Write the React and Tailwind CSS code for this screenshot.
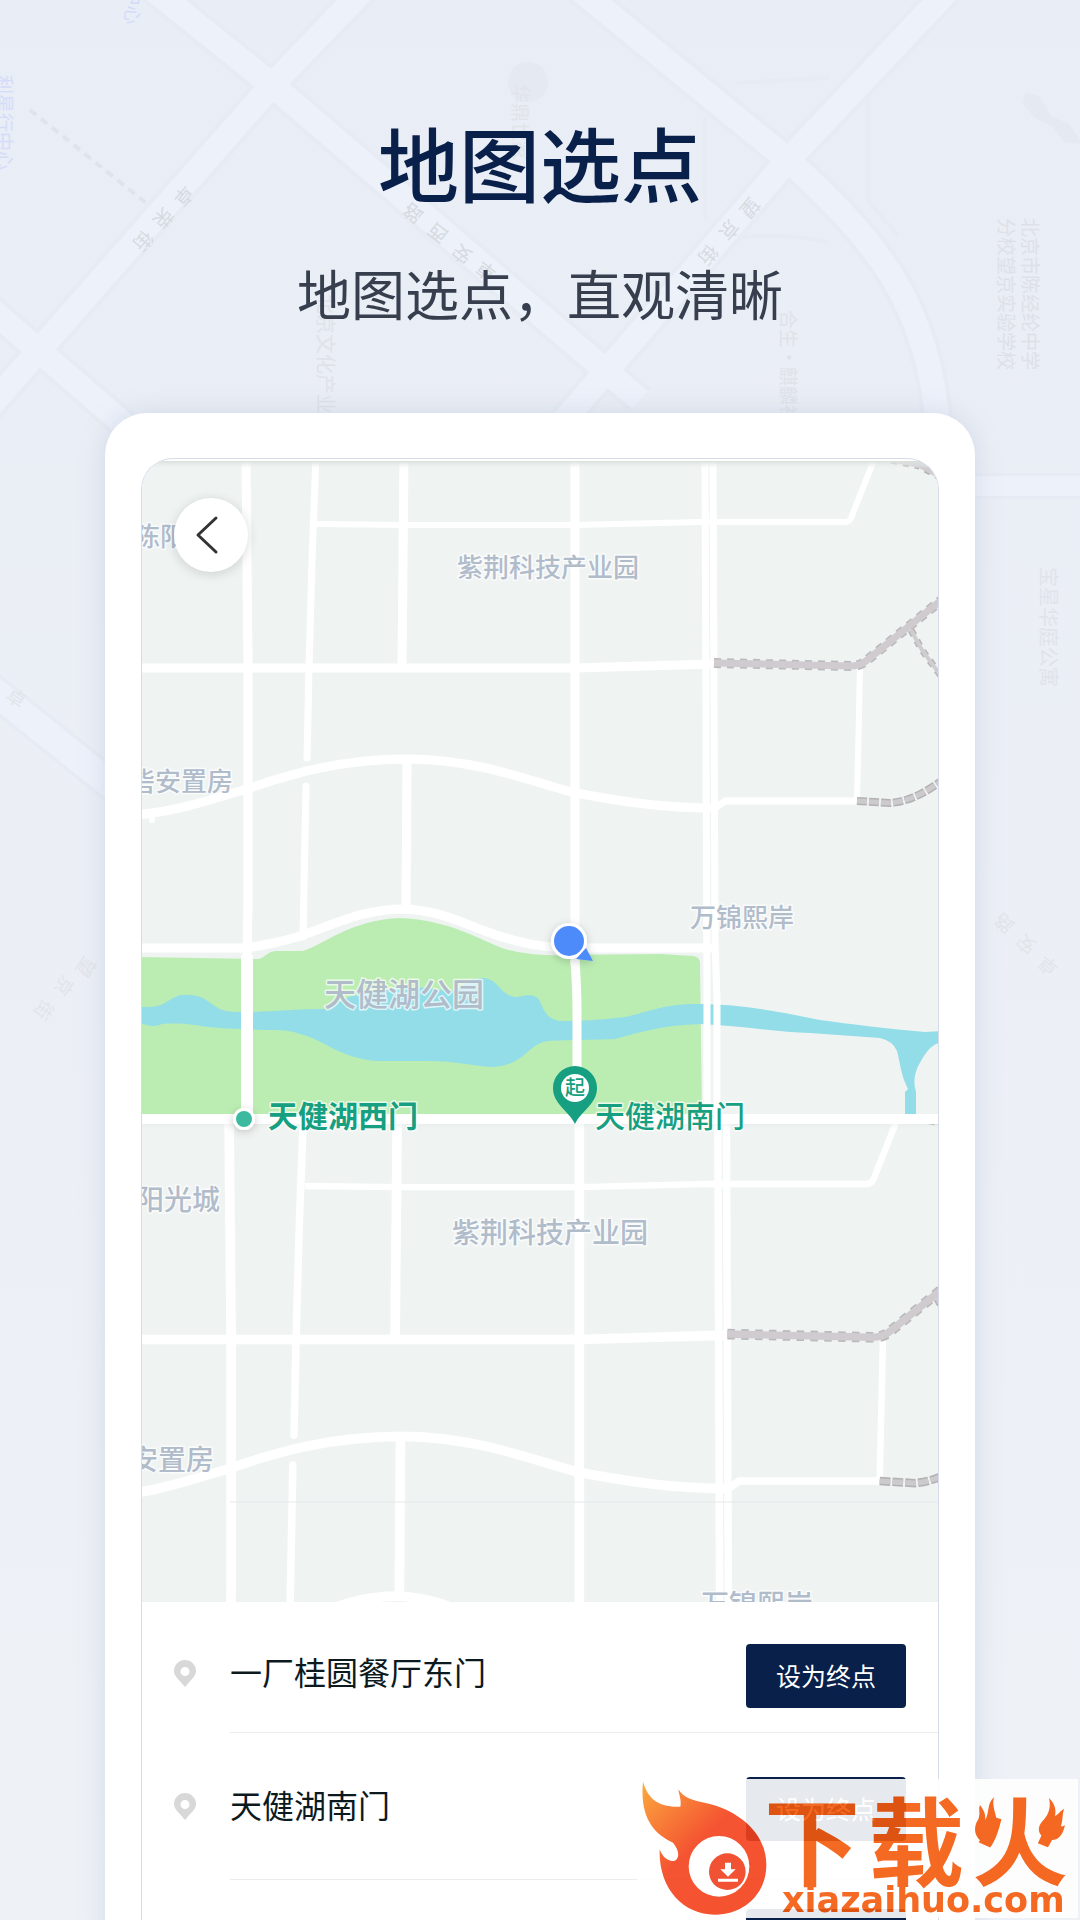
import React from "react";

const CJK = "font-['Noto_Sans_CJK_SC',sans-serif]";

const places = [
  { name: "一厂桂圆餐厅东门", row: "h-[130px] pt-[42px]" },
  { name: "天健湖南门", row: "h-[146px] pt-[44px]" },
  { name: "天健湖西门", row: "h-[100px] pt-[29px]" },
];

const cityLabels = [
  { text: "利星行中心", x: -3, y: 75, rotate: 90, size: 19, fill: "#d5dcfa" },
  { text: "中心", x: 128, y: -14, rotate: 95, size: 19, fill: "#d5dcfa" },
  { text: "华鼎世家", x: 513, y: 84, rotate: 90, size: 19, fill: "#e0e4e9" },
  { text: "北京文化产业", x: 318, y: 294, rotate: 90, size: 20, fill: "#dfe3e8" },
  { text: "合生·麒麟社", x: 781, y: 310, rotate: 90, size: 19, fill: "#dfe3e8" },
  { text: "北京市陈经纶中学", x: 1023, y: 218, rotate: 90, size: 19, fill: "#dde1e7" },
  { text: "分校望京实验学校", x: 999, y: 218, rotate: 90, size: 19, fill: "#dde1e7" },
  { text: "宝星华庭公寓", x: 1041, y: 567, rotate: 90, size: 20, fill: "#e0e4ea" },
];

// Street names set one character at a time along the road
const streetChars = [
  ["卓", 184, 196, 130], ["荣", 163, 218, 130], ["街", 143, 241, 130],
  ["路", 413, 213, -142], ["西", 438, 233, -142], ["安", 462, 254, -142], ["卓", 486, 271, -142],
  ["望", 750, 208, 130], ["京", 729, 230, 130], ["街", 708, 255, 130],
  ["卓", 16, 698, 35],
  ["望", 86, 967, 125], ["京", 64, 986, 125], ["街", 44, 1010, 125],
  ["路", 1004, 923, -140], ["安", 1026, 944, -140], ["卓", 1048, 966, -140],
];

const ROADS = "M145-17L272 85L640 400M375-22L272 85L-15 412M-20 300L125 425M570-18L788 160C870 235 930 300 938 430M958-20L788 160L560 425";

const CityBackdrop = () => (
  <svg
    viewBox="0 0 1080 1920"
    preserveAspectRatio="xMidYMin slice"
    className={`absolute inset-0 h-full w-full ${CJK}`}
    aria-hidden
  >
    <g fill="none" stroke="#e7ebf3">
      <path d={ROADS} strokeWidth="32" />
      <path d="M735 83l95-5M705 115v105M868 95v105l30 36M735 238q50-6 92 4" strokeWidth="4" />
      <path d="M-20 680L115 788" strokeWidth="34" />
      <path d="M970 486h120" strokeWidth="26" />
    </g>
    <g fill="none" stroke="#edf1fa">
      <path d={ROADS} strokeWidth="24" />
      <path d="M-20 680L115 788" strokeWidth="27" />
      <path d="M970 486h120" strokeWidth="20" />
    </g>
    <path d="M30 110l120 96" stroke="#e0e4ea" strokeWidth="4" strokeDasharray="8 6" fill="none" />
    <g fill="#e5e9f1">
      <circle cx="528" cy="82" r="20" />
      <path d="M1025 92l14 4 12 20 18 8 14 20-18-2-14-16-16-8-12-14z" />
    </g>
    {cityLabels.map((l) => (
      <text key={l.text} fontSize={l.size} fill={l.fill} transform={`translate(${l.x} ${l.y}) rotate(${l.rotate})`}>
        {l.text}
      </text>
    ))}
    {streetChars.map(([char, x, y, rotate]) => (
      <text
        key={`${char}${x}`}
        fontSize="19"
        fill={y > 500 ? "#e1e5e9" : "#d6dadf"}
        textAnchor="middle"
        transform={`translate(${x} ${y}) rotate(${rotate})`}
        dy="7"
      >
        {char}
      </text>
    ))}
  </svg>
);

const Roads = () => (
  <g fill="none" stroke="#fff" strokeWidth="9">
    <path d="M246 455L248 668V900L247 960" />
    <path d="M316 455L312 560L309 668L307 758M306 786L303 937" strokeWidth="7" strokeLinecap="round" />
    <path d="M404 455L402 666M407 762L406 908" />
    <path d="M317 524L405 525H575L700 522H845Q849 522 851 518L876 455" strokeWidth="6" />
    <path d="M136 668H575L714 664" />
    <path d="M575 455V965" />
    <path d="M705 455L707 1000V1116M713 455L715 940L717 1000V1116" strokeWidth="7" />
    <path d="M136 815C180 811 215 798 247 789C290 774 340 759 410 759C480 760 530 781 575 793C620 801 660 808 714 808" />
    <path d="M714 809L725 801H857" strokeWidth="7" />
    <path d="M152 816v4" strokeWidth="6" strokeLinecap="round" />
    <path d="M860 668L857 800" strokeWidth="6" />
    <path d="M136 948H247C270 944 290 940 303 935C340 922 365 909 405 909C440 911 460 922 485 931C520 944 545 948 575 948H712" />
  </g>
);

const Railways = () => (
  <g fill="none">
    <path d="M714 663L850 666Q860 666 866 661L944 598" stroke="#bcb9bc" strokeWidth="10" strokeDasharray="7 6" />
    <path d="M714 663L850 666Q860 666 866 661L944 598" stroke="#cfcbcf" strokeWidth="7" />
    <path d="M911 630L922 650L944 680" stroke="#b8b6b8" strokeWidth="7" strokeDasharray="6 6" />
    <path d="M911 630L922 650L944 680" stroke="#d0cdd0" strokeWidth="4" />
    <path d="M857 801L890 803C910 801 925 793 944 779" stroke="#b3b1b3" strokeWidth="8" strokeDasharray="10 2" />
    <path d="M857 801L890 803C910 801 925 793 944 779" stroke="#cdcacd" strokeWidth="5" strokeDasharray="10 2" />
    <path d="M892 458L920 464L942 476" stroke="#b3b1b3" strokeWidth="11" strokeDasharray="6 6" />
    <path d="M892 458L920 464L942 476" stroke="#cfcbcf" strokeWidth="8" />
  </g>
);

const Park = () => (
  <>
    <path
      d="M136 957L258 959C266 958 266 951 278 951H303C325 944 350 920 400 918C450 920 480 940 505 949C520 953 540 956 560 955L660 954L693 956Q700 957 700 963L702 1116H136Z"
      fill="#bbedb2"
    />
    <path
      d="M136 1006C150 1008 158 1007 165 1003C175 997 178 994 188 995C204 995 207 1002 218 1008C224 1012 235 1012 245 1012C270 1012 290 1009 330 1009C340 1000 350 994 375 992C400 986 430 986 450 992C465 985 472 978 484 978C500 980 500 997 518 997C530 994 538 994 541 1004C546 1016 552 1021 563 1021C580 1021 600 1020 625 1017C650 1012 660 1004 700 1004C740 1004 780 1012 820 1020C850 1024 890 1029 925 1032L944 1031V1042C932 1043 926 1052 921 1061C914 1072 913 1082 916 1092V1114H905V1092L908 1089C901 1076 900 1062 897 1051Q893 1041 880 1038L810 1033C780 1032 740 1026 700 1024C665 1025 640 1032 615 1039C595 1040 560 1040 548 1041C528 1043 525 1066 492 1067C475 1066 455 1061 430 1061H375C335 1056 325 1040 300 1034C290 1030 280 1030 265 1030C245 1029 220 1029 200 1026C190 1024 175 1023 162 1024C152 1028 146 1025 136 1022Z"
      fill="#92dde8"
    />
  </>
);

const MapLabel = ({ x, y, size, children, anchor = "middle", fill = "#b1bccb", weight = 500 }) => (
  <text
    x={x}
    y={y}
    fontSize={size}
    textAnchor={anchor}
    fill={fill}
    fontWeight={weight}
    stroke="#fff"
    strokeOpacity="0.7"
    strokeWidth="3"
    strokeLinejoin="round"
    paintOrder="stroke"
  >
    {children}
  </text>
);

const CityMap = () => (
  <svg
    viewBox="142 461 796 1141"
    preserveAspectRatio="xMidYMin slice"
    className={`block w-full ${CJK}`}
    role="img"
    aria-label="天健湖公园地图"
  >
    <defs>
      <linearGradient id="topShade" x1="0" y1="0" x2="0" y2="1">
        <stop offset="0" stopColor="#d9dfdd" />
        <stop offset="1" stopColor="#eff4f3" stopOpacity="0" />
      </linearGradient>
      <filter id="soft" x="-50%" y="-50%" width="200%" height="200%">
        <feDropShadow dx="0" dy="2" stdDeviation="4" floodColor="#000" floodOpacity="0.2" />
      </filter>
    </defs>

    {/* southern tile */}
    <rect x="142" y="461" width="796" height="1141" fill="#eff4f3" />
    <g transform="translate(-33 628) scale(1.065)">
      <Roads />
      <Railways />
    </g>
    <path d="M230 1502h708" stroke="#e4e9ec" strokeWidth="1" />
    <MapLabel x={136} y={1210} size={28} anchor="start">阳光城</MapLabel>
    <MapLabel x={550} y={1243} size={28}>紫荆科技产业园</MapLabel>
    <MapLabel x={130} y={1470} size={28} anchor="start">安置房</MapLabel>
    <MapLabel x={757} y={1615} size={28}>万锦熙岸</MapLabel>

    {/* northern tile */}
    <rect x="142" y="461" width="796" height="661" fill="#eff4f3" />
    <rect x="142" y="1122" width="796" height="8" fill="url(#topShade)" opacity="0.5" />
    <Park />
    <Roads />
    <g stroke="#fff" fill="none">
      <path d="M247 955V1116" strokeWidth="12" />
      <path d="M575 960Q577 990 577 1010V1116" strokeWidth="9" />
      <path d="M136 1119H944" strokeWidth="10" />
    </g>
    <Railways />
    <rect x="142" y="461" width="796" height="8" fill="url(#topShade)" />
    <MapLabel x={134} y={546} size={26} anchor="start">陈阳</MapLabel>
    <MapLabel x={548} y={577} size={26}>紫荆科技产业园</MapLabel>
    <MapLabel x={129} y={791} size={26} anchor="start">砦安置房</MapLabel>
    <MapLabel x={742} y={927} size={26}>万锦熙岸</MapLabel>
    <MapLabel x={404} y={1006} size={32}>天健湖公园</MapLabel>

    {/* current position */}
    <g filter="url(#soft)">
      <circle cx="569" cy="941" r="18" fill="#fff" />
      <path d="M576 959L593 961L586 948Z" fill="#4d8bfb" />
    </g>
    <circle cx="569" cy="941" r="15" fill="#4d8bfb" />

    {/* west gate */}
    <circle cx="244" cy="1119" r="11" fill="#fff" filter="url(#soft)" />
    <circle cx="244" cy="1119" r="8" fill="#3cbaa0" />
    <MapLabel x={268} y={1127} size={30} anchor="start" fill="#169f80" weight={700}>天健湖西门</MapLabel>

    {/* south gate, start of the route */}
    <path d="M575 1124C568 1110 553 1104 553 1088A22 22 0 0 1 597 1088C597 1104 582 1110 575 1124Z" fill="#169f80" />
    <circle cx="575" cy="1088" r="14" fill="#fff" />
    <text x="575" y="1095" fontSize="20" fontWeight="500" textAnchor="middle" fill="#169f80">起</text>
    <MapLabel x={595} y={1127} size={30} anchor="start" fill="#169f80" weight={500}>天健湖南门</MapLabel>
  </svg>
);

const PinIcon = () => (
  <svg viewBox="0 0 22 27" className="mt-4 h-[27px] w-[22px] shrink-0" aria-hidden>
    <path
      fillRule="evenodd"
      d="M11 0A11 11 0 0 1 22 11C22 17 16 20 12 26Q11 27.500 10 26C6 20 0 17 0 11A11 11 0 0 1 11 0ZM11 7A4.500 4.500 0 1 0 11 16A4.500 4.500 0 1 0 11 7Z"
      fill="#d8d8d8"
    />
  </svg>
);

const PlaceRow = ({ place }) => (
  <li className={`flex items-start pl-8 ${place.row}`}>
    <PinIcon />
    <div className="ml-[34px] flex h-full flex-1 items-start justify-between">
      <span className="mt-[5px] text-[32px] leading-[44px] text-[#0c1a1e]">{place.name}</span>
      <button type="button" className="mr-8 h-16 w-40 shrink-0 rounded-[4px] bg-[#08204a] text-[25px] text-white">
        设为终点
      </button>
    </div>
  </li>
);

const FlameLogo = () => (
  <svg viewBox="22 477 393 417" className="h-[139px] w-[131px] shrink-0" aria-hidden>
    <defs>
      <linearGradient id="flame" x1="0" y1="0" x2="0.7" y2="0.8">
        <stop offset="0" stopColor="#fca12a" />
        <stop offset="0.6" stopColor="#f4421c" />
        <stop offset="1" stopColor="#f4401a" />
      </linearGradient>
    </defs>
    <path
      d="M40 485C54 532 80 562 152 560C156 540 148 526 146 508C162 534 190 542 228 549C330 572 410 640 410 735C410 820 345 884 255 884C160 884 86 805 90 688C98 712 118 727 135 722C150 716 150 692 130 668C70 640 30 590 40 485Z"
      fill="url(#flame)"
    />
    <circle cx="268" cy="739" r="91" fill="#fff" />
    <circle cx="293" cy="755" r="55" fill="#f0401e" />
    <path d="M286 728h18v20h14l-23 22-23-22h14zM265 776h60v9h-60z" fill="#fff" />
  </svg>
);

// Twin tongues of fire on either side of the last character
const SideFlames = () => (
  <svg viewBox="0 0 96 96" className="absolute inset-0 size-full" fill="currentColor" aria-hidden>
    <path d="M13 54C2 50 1 38 6 31C9 25 6 20 8 16C12 22 14 25 13 31C18 24 14 16 22 8C19 18 26 27 25 38C25 47 21 54 13 54Z" />
    <path d="M78 51C68 49 64 41 69 34C74 28 80 22 77 9C84 16 84 22 83 27C86 26 88 22 92 20C90 26 91 31 89 37C90 38 92 37 93 36C91 45 87 52 78 51Z" />
  </svg>
);

export default function App() {
  return (
    <div className={`relative flex h-screen flex-col overflow-hidden bg-linear-to-b from-[#e9edf5] to-[#eef1f6] ${CJK}`}>
      <CityBackdrop />

      <header className="relative pt-[111px] text-center">
        <h1 className="text-[81px] leading-[100px] font-medium text-[#08204a]">地图选点</h1>
        <p className="mt-[46px] text-[54px] leading-[72px] text-[#373f4e]">地图选点，直观清晰</p>
      </header>

      <main className="relative mx-[105px] mt-[84px] shrink-0 rounded-t-[42px] bg-white px-9 pt-[45px] shadow-[0_0_24px_rgba(160,178,208,0.35)]">
        <section className="relative overflow-hidden rounded-t-[32px] border border-b-0 border-[#d5dbe8] bg-white pt-[2px]">
          <CityMap />
          <button
            type="button"
            aria-label="返回"
            className="absolute top-[39px] left-8 flex size-[74px] items-center justify-center rounded-full bg-white shadow-[0_2px_12px_rgba(0,0,0,0.15)]"
          >
            <svg viewBox="0 0 74 74" className="size-full" fill="none" stroke="#333" strokeWidth="3" strokeLinecap="round" strokeLinejoin="round" aria-hidden>
              <path d="M42 20L24 37L42 54" />
            </svg>
          </button>
          <ul>
            {places.map((p, i) => (
              <React.Fragment key={p.name}>
                {i > 0 && <li role="separator" className="ml-[88px] h-px bg-[#ececee]" />}
                <PlaceRow place={p} />
              </React.Fragment>
            ))}
          </ul>
        </section>
      </main>

      <aside className="absolute right-[2px] bottom-[2px] flex h-[139px] w-[441px] bg-white opacity-90">
        <FlameLogo />
        <div className="flex flex-col items-start text-[#f55a0c]">
          <div className="mt-[10px] -ml-1 flex gap-2 text-[96px] leading-[96px] font-bold">
            <span>下</span>
            <span>载</span>
            <span className="relative">
              火
              <SideFlames />
            </span>
          </div>
          <span className="-mt-1 ml-[14px] font-['DejaVu_Sans',sans-serif] text-[35px] leading-[38px] font-bold">xiazaihuo.com</span>
        </div>
      </aside>
    </div>
  );
}
